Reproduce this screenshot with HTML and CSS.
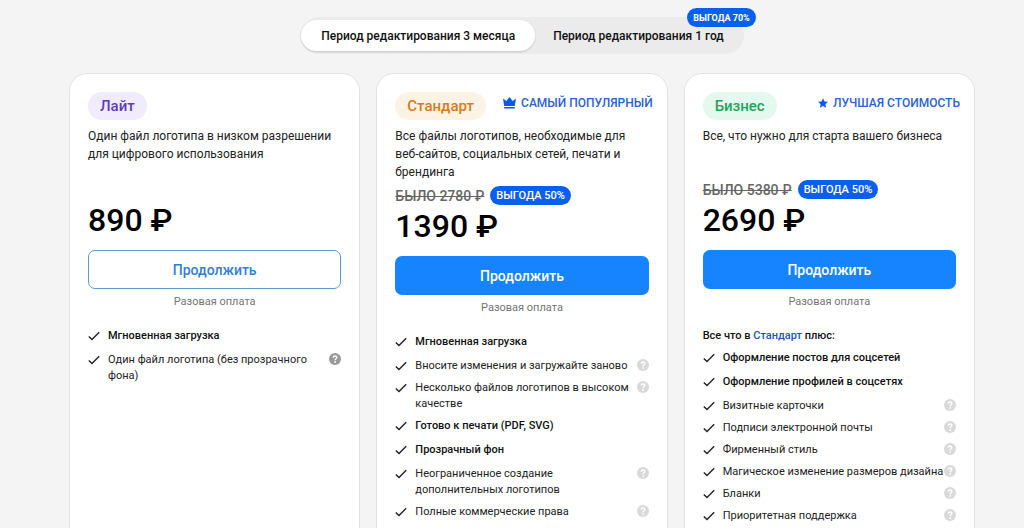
FILE: index.html
```html
<!DOCTYPE html>
<html lang="ru">
<head>
<meta charset="utf-8">
<meta name="viewport" content="width=device-width, initial-scale=1">
<title>Тарифы</title>
<link rel="stylesheet" href="styles.css">
</head>
<body>
<svg class="sprite" aria-hidden="true">
  <symbol id="check" viewBox="0 0 12 10"><path d="M.8 5.4 4 8.5 11.2 1.3" fill="none" stroke="#222" stroke-width="1.4"/></symbol>
  <symbol id="help" viewBox="0 0 12 12"><circle cx="6" cy="6" r="6" fill="currentColor"/><path d="M4.2 4.7C4.3 2.5 7.8 2.5 7.8 4.6 7.8 5.8 6.1 5.8 6.1 7.2" fill="none" stroke="#fff" stroke-width="1.4"/><circle cx="6.1" cy="9" r=".9" fill="#fff"/></symbol>
</svg>
<main class="page">
  <div class="period" role="group" aria-label="Период редактирования">
    <button class="period-option is-active" type="button" aria-pressed="true">Период редактирования 3 месяца</button>
    <button class="period-option" type="button" aria-pressed="false">Период редактирования 1 год</button>
    <span class="save period-save">ВЫГОДА 70%</span>
  </div>

  <div class="plans">
    <section class="plan">
      <header class="plan-head"><h2 class="tag tag-lite">Лайт</h2></header>
      <p class="about">Один файл логотипа в низком разрешении для цифрового использования</p>
      <div class="was"></div>
      <p class="price">890 ₽</p>
      <button class="buy buy-outline" type="button">Продолжить</button>
      <p class="note">Разовая оплата</p>
      <ul class="features">
        <li class="feature strong"><svg class="check"><use href="#check"/></svg><span class="label">Мгновенная загрузка</span></li>
        <li class="feature"><svg class="check"><use href="#check"/></svg><span class="label">Один файл логотипа (без прозрачного фона)</span><button class="help help-dark" type="button" aria-label="Подробнее"><svg><use href="#help"/></svg></button></li>
      </ul>
    </section>

    <section class="plan" id="standard">
      <header class="plan-head"><h2 class="tag tag-standard">Стандарт</h2>
        <span class="ribbon"><svg class="crown" viewBox="0 0 13 12"><path d="M0 1.6 3.3 4 6.5 0 9.7 4 13 1.6 11.8 9H1.2ZM1.2 10h10.6v1.6H1.2Z" fill="#0b5be8"/></svg>САМЫЙ ПОПУЛЯРНЫЙ</span></header>
      <p class="about">Все файлы логотипов, необходимые для веб-сайтов, социальных сетей, печати и брендинга</p>
      <div class="was"><s>БЫЛО 2780 ₽</s><span class="save">ВЫГОДА 50%</span></div>
      <p class="price">1390 ₽</p>
      <button class="buy" type="button">Продолжить</button>
      <p class="note">Разовая оплата</p>
      <ul class="features">
        <li class="feature strong"><svg class="check"><use href="#check"/></svg><span class="label">Мгновенная загрузка</span></li>
        <li class="feature"><svg class="check"><use href="#check"/></svg><span class="label">Вносите изменения и загружайте заново</span><button class="help" type="button" aria-label="Подробнее"><svg><use href="#help"/></svg></button></li>
        <li class="feature"><svg class="check"><use href="#check"/></svg><span class="label">Несколько файлов логотипов в высоком качестве</span><button class="help" type="button" aria-label="Подробнее"><svg><use href="#help"/></svg></button></li>
        <li class="feature strong"><svg class="check"><use href="#check"/></svg><span class="label">Готово к печати (PDF, SVG)</span></li>
        <li class="feature strong"><svg class="check"><use href="#check"/></svg><span class="label">Прозрачный фон</span></li>
        <li class="feature"><svg class="check"><use href="#check"/></svg><span class="label">Неограниченное создание дополнительных логотипов</span><button class="help" type="button" aria-label="Подробнее"><svg><use href="#help"/></svg></button></li>
        <li class="feature"><svg class="check"><use href="#check"/></svg><span class="label">Полные коммерческие права</span><button class="help" type="button" aria-label="Подробнее"><svg><use href="#help"/></svg></button></li>
      </ul>
    </section>

    <section class="plan">
      <header class="plan-head"><h2 class="tag tag-business">Бизнес</h2>
        <span class="ribbon"><svg class="star" viewBox="0 0 10 10"><path d="M5 .2 6.5 3.4 10 3.8 7.4 6.2 8.1 9.7 5 8 1.9 9.7 2.6 6.2 0 3.8 3.5 3.4Z" fill="#0b5be8"/></svg>ЛУЧШАЯ СТОИМОСТЬ</span></header>
      <p class="about">Все, что нужно для старта вашего бизнеса</p>
      <div class="was"><s>БЫЛО 5380 ₽</s><span class="save">ВЫГОДА 50%</span></div>
      <p class="price">2690 ₽</p>
      <button class="buy" type="button">Продолжить</button>
      <p class="note">Разовая оплата</p>
      <p class="plus">Все что в <a href="#standard">Стандарт</a> плюс:</p>
      <ul class="features features-after">
        <li class="feature strong"><svg class="check"><use href="#check"/></svg><span class="label">Оформление постов для соцсетей</span></li>
        <li class="feature strong"><svg class="check"><use href="#check"/></svg><span class="label">Оформление профилей в соцсетях</span></li>
        <li class="feature"><svg class="check"><use href="#check"/></svg><span class="label">Визитные карточки</span><button class="help" type="button" aria-label="Подробнее"><svg><use href="#help"/></svg></button></li>
        <li class="feature"><svg class="check"><use href="#check"/></svg><span class="label">Подписи электронной почты</span><button class="help" type="button" aria-label="Подробнее"><svg><use href="#help"/></svg></button></li>
        <li class="feature"><svg class="check"><use href="#check"/></svg><span class="label">Фирменный стиль</span><button class="help" type="button" aria-label="Подробнее"><svg><use href="#help"/></svg></button></li>
        <li class="feature"><svg class="check"><use href="#check"/></svg><span class="label">Магическое изменение размеров дизайна</span><button class="help" type="button" aria-label="Подробнее"><svg><use href="#help"/></svg></button></li>
        <li class="feature"><svg class="check"><use href="#check"/></svg><span class="label">Бланки</span><button class="help" type="button" aria-label="Подробнее"><svg><use href="#help"/></svg></button></li>
        <li class="feature"><svg class="check"><use href="#check"/></svg><span class="label">Приоритетная поддержка</span><button class="help" type="button" aria-label="Подробнее"><svg><use href="#help"/></svg></button></li>
      </ul>
    </section>
  </div>
</main>
</body>
</html>
```
FILE: styles.css
```css
* { box-sizing: border-box; }
html { scrollbar-width: none; }
body { margin: 0; background: #f4f4f4; color: #222; font-family: Roboto, "Liberation Sans", sans-serif; }
h2, p, ul { margin: 0; padding: 0; }
button { font-family: inherit; border: 0; cursor: pointer; }
.sprite { display: none; }
.page { display: flex; flex-direction: column; align-items: center; gap: 19px; padding: 17px 49px 32px 69px; }

.period { position: relative; display: flex; padding: 3px 2px 3px 1px; border-radius: 19px; background: #ebebeb; }
.period-option { height: 31px; padding: 0 18px; border-radius: 16px; background: none; color: #111; font-size: 12px; font-weight: 500; }
.period-option.is-active { padding: 0 20px; background: #fff; box-shadow: 0 1px 2px rgba(0, 0, 0, .16); }
.save { display: flex; align-items: center; height: 19px; padding: 0 6px; border-radius: 10px; background: #0b5ff0; color: #fff; font-size: 11px; font-weight: 500; white-space: nowrap; }
.period-save { position: absolute; top: -9px; right: -12px; font-size: 9px; font-weight: 700; }

.plans { display: grid; grid-template-columns: repeat(3, minmax(0, 1fr)); gap: 16px; width: 100%; }
.plan { padding: 18px 18px 32px; border: 1px solid #e2e2e2; border-radius: 18px; background: #fff; }
.plan-head { display: flex; justify-content: space-between; align-items: flex-start; height: 35px; margin-right: -4px; white-space: nowrap; }
.tag { padding: 0 12px; border-radius: 14px; font-size: 15px; line-height: 28px; font-weight: 500; }
.tag-lite { background: #f0ebfd; color: #5f3bb5; }
.tag-standard { background: #fdf3e4; color: #d67b20; }
.tag-business { background: #e5f8ef; color: #1ea45c; }
.ribbon { display: flex; align-items: center; gap: 5px; height: 21px; color: #2a62cf; font-size: 12px; font-weight: 500; }
.crown { width: 13px; height: 12px; }
.star { width: 10px; height: 10px; }
.about { min-height: 48px; font-size: 12px; line-height: 18px; }
.was { display: flex; align-items: center; gap: 6px; height: 19px; margin-top: 5px; color: #666; font-size: 14px; font-weight: 500; }
.price { margin-top: 2px; color: #000; font-size: 32px; line-height: 38px; font-weight: 500; }
.buy { display: block; width: 100%; height: 39px; margin-top: 11px; border-radius: 7px; background: #1684ff; color: #fff; font-size: 14px; font-weight: 500; }
.buy-outline { border: 1px solid #5b9cc4; background: #fff; color: #2e7fdc; }
.note { margin-top: 5px; color: #757575; font-size: 11px; line-height: 16px; text-align: center; }
.plus { margin-top: 18px; color: #111; font-size: 11px; line-height: 16px; font-weight: 500; }
.plus a { color: #1b55b0; text-decoration: none; }
.features { margin-top: 18px; list-style: none; }
.features-after { margin-top: 6px; }
.feature { display: flex; align-items: flex-start; margin-bottom: 6px; font-size: 11px; line-height: 16px; }
.strong { margin-bottom: 8px; color: #111; font-weight: 500; }
.check { flex: none; width: 12px; height: 10px; margin: 3px 8px 0 0; }
.label { flex: 1; min-width: 0; margin-right: -4px; }
.help { flex: none; width: 12px; height: 12px; margin-top: 1px; padding: 0; background: none; color: #d9d9d9; }
.help svg { display: block; width: 12px; height: 12px; }
.help-dark { color: #999; }
```
